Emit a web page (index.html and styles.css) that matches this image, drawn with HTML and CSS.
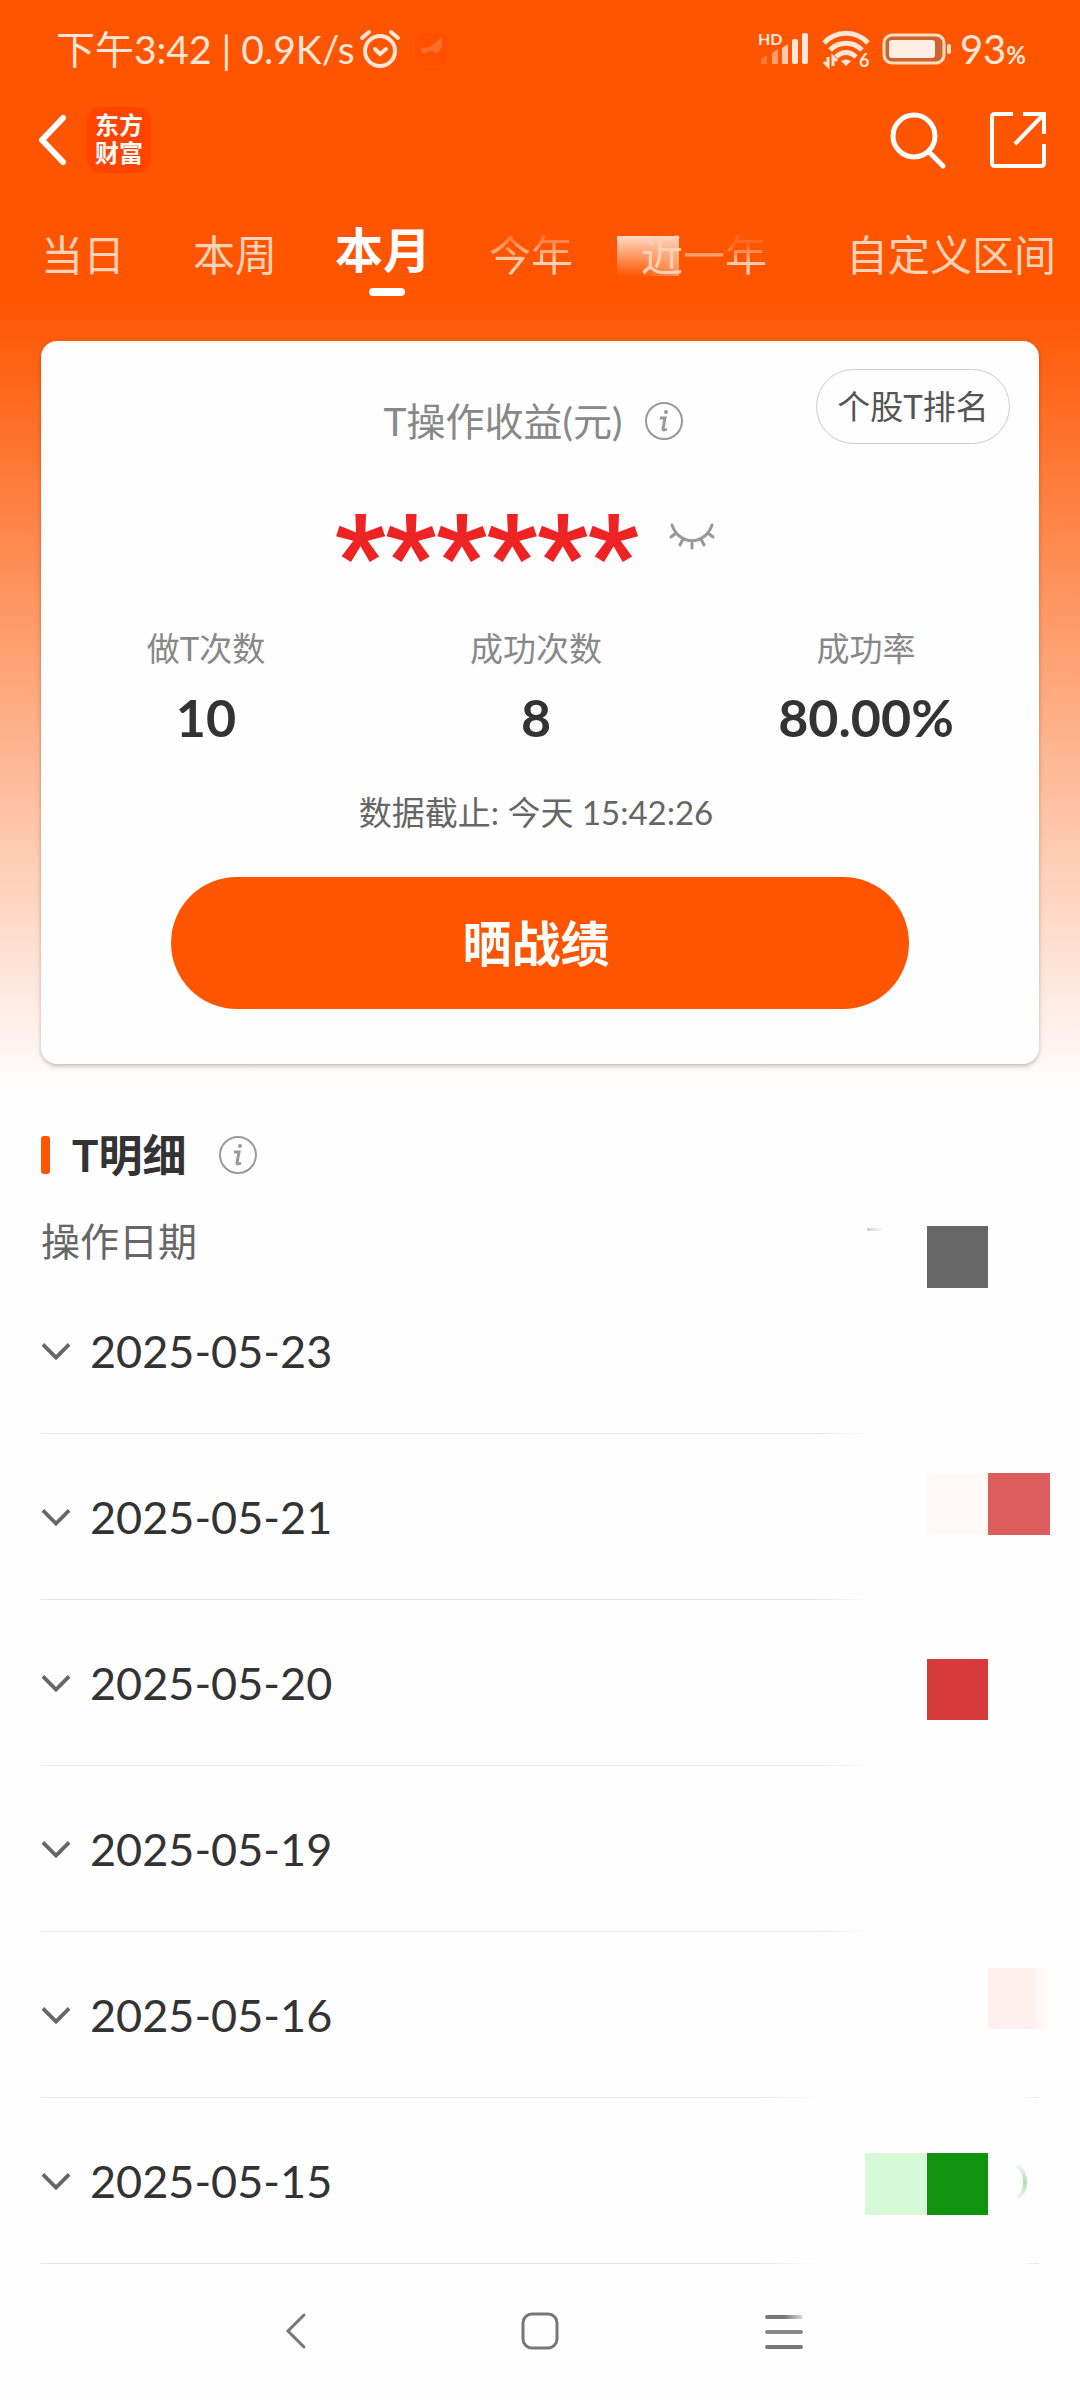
FILE: index.html
```html
<!DOCTYPE html>
<html lang="zh-CN">
<head>
  <meta charset="UTF-8">
  <meta name="viewport" content="width=device-width, initial-scale=1">
  <title>T操作收益</title>
  <link rel="stylesheet" href="styles.css">
</head>
<body>
  <div class="hero">
    <div class="status-bar">
      <span class="status-time">下午3:42 | 0.9K/s</span>
      <svg class="alarm" width="42" height="40" viewBox="0 0 42 40" fill="none" stroke="#ffe6d6" stroke-linecap="round">
        <circle cx="21" cy="22" r="15" stroke-width="4"/>
        <path d="M3 9l7-6M39 9l-7-6" stroke-width="4"/>
        <path d="M16 20l5 5 6-5" stroke-width="4"/>
      </svg>
      <svg class="app-mark" width="32" height="32" viewBox="0 0 32 32">
        <rect width="32" height="32" rx="8" fill="#ff4d00"/>
        <path d="M6 15c8 0 14-3 20-11 3 8 0 14-5 17-2-3-4-4-7-3-2 1-3 3-5 3-2-1-3-3-3-6z" fill="#ff8044"/>
      </svg>
      <div class="status-right">
        <svg width="52" height="36" viewBox="0 0 52 36" fill="#ffe6d6">
          <text x="0" y="14" class="hd">HD</text>
          <path d="M3 28l6-4v9H3z" opacity=".25"/>
          <path d="M14 22l6-4v15h-6z" opacity=".5"/>
          <path d="M24 17l6-4v20h-6z" opacity=".8"/>
          <rect x="34" y="8" width="6" height="25" rx="2"/>
          <rect x="44" y="2" width="6" height="31" rx="2"/>
        </svg>
        <svg width="48" height="38" viewBox="0 0 48 38" fill="none" stroke="#ffe6d6" stroke-width="5">
          <path d="M2 13c12-13 32-13 44 0"/>
          <path d="M8 20c9-9 23-9 32 0"/>
          <path d="M14 27c6-6 14-6 20 0"/>
          <path d="M24 36l-5-5q5-3 10 0z" fill="#ffe6d6" stroke="none"/>
          <path d="M6 27v9l-4-4M11 36v-9l4 4" stroke-width="3"/>
          <text x="37" y="37" class="wifi-six">6</text>
        </svg>
        <svg width="70" height="32" viewBox="0 0 70 32">
          <rect x="2" y="2" width="60" height="28" rx="8" fill="#cc6430" stroke="#ffdcc0" stroke-width="3"/>
          <rect x="7" y="7" width="46" height="18" rx="3" fill="#ffeee4"/>
          <rect x="65" y="11" width="4" height="10" rx="2" fill="#ffdcc0"/>
        </svg>
        <span class="battery-text">93<small>%</small></span>
      </div>
    </div>

    <header class="app-header">
      <button class="icon-button" aria-label="返回">
        <svg width="28" height="50" viewBox="0 0 28 50" fill="none" stroke="#fff" stroke-width="6" stroke-linecap="round" stroke-linejoin="round"><path d="M25 3L4 25l21 22"/></svg>
      </button>
      <div class="logo"><span>东方</span><span>财富</span></div>
      <div class="header-actions">
        <button class="icon-button" aria-label="搜索">
          <svg width="56" height="56" viewBox="0 0 56 56" fill="none" stroke="#fff" stroke-width="5" stroke-linecap="round"><circle cx="24" cy="24" r="21"/><path d="M39 40l14 14"/></svg>
        </button>
        <button class="icon-button" aria-label="分享">
          <svg width="56" height="56" viewBox="0 0 56 56" fill="none" stroke="#fff" stroke-width="4"><path d="M23 2H5Q2 2 2 5v46q0 3 3 3h46q3 0 3-3V32"/><path d="M33 2h21v20M54 2L25 32"/></svg>
        </button>
      </div>
    </header>

    <nav class="tabs">
      <a href="#">当日</a>
      <a href="#">本周</a>
      <a href="#" class="active">本月</a>
      <a href="#" class="fade">今年</a>
      <a href="#" class="smudge"><span>近</span><span class="fade">一年</span></a>
      <a href="#" class="last">自定义区间</a>
    </nav>

    <main class="card">
      <button class="rank-button">个股T排名</button>
      <div class="card-title">
        <span>T操作收益(元)</span>
        <svg width="40" height="40" viewBox="0 0 40 40"><circle cx="20" cy="20" r="18" fill="none" stroke="#999" stroke-width="2"/><circle cx="22" cy="11" r="2" fill="#999"/><path d="M16 17h5l-2 11q0 2 4 0" fill="none" stroke="#999" stroke-width="3"/></svg>
      </div>
      <div class="profit">
        <span class="stars">******</span>
        <button class="icon-button" aria-label="显示金额">
          <svg width="46" height="28" viewBox="0 0 46 28" fill="none" stroke="#999" stroke-width="3" stroke-linecap="round"><path d="M3 3c7 21 33 21 40 0M7 11l-5 4M39 11l5 4M14 17l-3 6M32 17l3 6M23 19v7"/></svg>
        </button>
      </div>
      <dl class="stats">
        <div><dt>做T次数</dt><dd>10</dd></div>
        <div><dt>成功次数</dt><dd>8</dd></div>
        <div><dt>成功率</dt><dd>80.00%</dd></div>
      </dl>
      <p class="deadline">数据截止: 今天 15:42:26</p>
      <button class="share-button">晒战绩</button>
    </main>
  </div>

  <section class="detail">
    <h2>
      <span>T明细</span>
      <svg width="40" height="40" viewBox="0 0 40 40"><circle cx="20" cy="20" r="18" fill="none" stroke="#999" stroke-width="2"/><circle cx="22" cy="11" r="2" fill="#999"/><path d="M16 17h5l-2 11q0 2 4 0" fill="none" stroke="#999" stroke-width="3"/></svg>
    </h2>
    <div class="column-head">操作日期</div>
    <ul class="dates">
      <li><button><svg class="chevron" viewBox="0 0 32 20"><path d="M2 3l14 14L30 3"/></svg>2025-05-23</button></li>
      <li><button><svg class="chevron" viewBox="0 0 32 20"><path d="M2 3l14 14L30 3"/></svg>2025-05-21</button></li>
      <li><button><svg class="chevron" viewBox="0 0 32 20"><path d="M2 3l14 14L30 3"/></svg>2025-05-20</button></li>
      <li><button><svg class="chevron" viewBox="0 0 32 20"><path d="M2 3l14 14L30 3"/></svg>2025-05-19</button></li>
      <li class="tail"><button><svg class="chevron" viewBox="0 0 32 20"><path d="M2 3l14 14L30 3"/></svg>2025-05-16</button></li>
      <li class="tail"><button><svg class="chevron" viewBox="0 0 32 20"><path d="M2 3l14 14L30 3"/></svg>2025-05-15</button></li>
    </ul>
    <!-- mosaic over the amounts -->
    <svg class="mosaic" width="220" height="1000" viewBox="0 0 220 1000">
      <defs>
        <linearGradient id="pink"><stop offset=".7" stop-color="#fff0ee"/><stop offset="1" stop-color="#fff0ee" stop-opacity="0"/></linearGradient>
        <linearGradient id="dash"><stop offset="0" stop-color="#ccc"/><stop offset="1" stop-color="#ccc" stop-opacity="0"/></linearGradient>
        <linearGradient id="green" x2="0" y2="1"><stop offset="0" stop-color="#b0dcb0" stop-opacity=".2"/><stop offset=".5" stop-color="#b0dcb0"/><stop offset="1" stop-color="#b0dcb0" stop-opacity=".2"/></linearGradient>
      </defs>
      <rect x="7" y="2" width="16" height="3" fill="url(#dash)"/>
      <rect x="67" y="0" width="61" height="62" fill="#666"/>
      <rect x="67" y="247" width="61" height="62" fill="#fffaf8"/>
      <rect x="128" y="247" width="62" height="62" fill="#db5d5e"/>
      <rect x="67" y="433" width="61" height="61" fill="#d73a3b"/>
      <rect x="128" y="742" width="62" height="61" fill="url(#pink)"/>
      <rect x="5" y="927" width="62" height="62" fill="#d6f9d7"/>
      <rect x="67" y="927" width="61" height="62" fill="#10940f"/>
      <path d="M157 940q8 4 8 16t-8 16" fill="none" stroke="url(#green)" stroke-width="4"/>
    </svg>
  </section>

  <div class="system-nav">
    <button class="icon-button" aria-label="后退"><svg width="38" height="38" viewBox="0 0 38 38"><path d="M27 3L11 19l16 16"/></svg></button>
    <button class="icon-button" aria-label="主页"><svg width="38" height="38" viewBox="0 0 38 38"><rect x="2" y="2" width="34" height="34" rx="9"/></svg></button>
    <button class="icon-button" aria-label="菜单">
      <svg width="38" height="38" viewBox="0 0 38 38">
        <defs><linearGradient id="line"><stop offset=".5" stop-color="#777"/><stop offset="1" stop-color="#ddd"/></linearGradient></defs>
        <rect class="bar" y="3" width="38" height="4" rx="2" fill="url(#line)"/>
        <rect class="bar" y="18" width="38" height="4" rx="2" fill="#888"/>
        <rect class="bar" y="33" width="38" height="4" rx="2" fill="#777"/>
      </svg>
    </button>
  </div>
</body>
</html>
```
FILE: styles.css
```css
* {
  box-sizing: border-box;
}
body {
  margin: 0;
  background: #fefefe;
  color: #333;
  font-family: Lato, "Noto Sans CJK SC", sans-serif;
}
button {
  font-family: inherit;
  color: inherit;
  background: none;
  border: none;
  padding: 0;
  cursor: pointer;
}
svg {
  display: block;
  flex: none;
  overflow: visible;
}
.icon-button {
  display: flex;
}
.hero {
  padding-bottom: 40px;
  background: linear-gradient(#ff5500 300px, #fefefe 1090px);
}

/* status bar */
.status-bar {
  display: flex;
  align-items: center;
  height: 98px;
  padding: 0 54px 0 56px;
  color: #ffe6d6;
}
.status-time {
  padding-bottom: 4px;
  font-size: 39px;
  white-space: nowrap;
}
.alarm {
  margin-left: 4px;
}
.app-mark {
  margin-left: 14px;
  opacity: 0.6;
}
.status-right {
  display: flex;
  align-items: center;
  gap: 12px;
  margin-left: auto;
}
.hd {
  font-size: 16px;
  font-weight: 700;
}
.wifi-six {
  font-size: 18px;
  font-weight: 700;
  fill: #ffe6d6;
  stroke: none;
}
.battery-text {
  margin-left: -4px;
  font-size: 40px;
}
.battery-text small {
  font-size: 24px;
  font-weight: 700;
}

/* header */
.app-header {
  display: flex;
  align-items: center;
  height: 84px;
  padding: 0 34px 0 38px;
}
.logo {
  display: flex;
  flex-direction: column;
  align-items: center;
  justify-content: center;
  width: 64px;
  height: 66px;
  margin-left: 21px;
  border-radius: 14px;
  background: #ff4400;
  color: #fff;
  font-family: "Liberation Sans", "Noto Sans CJK SC", sans-serif;
  font-size: 24px;
  font-weight: 700;
  line-height: 28px;
}
.header-actions {
  display: flex;
  gap: 44px;
  margin-left: auto;
}

/* tabs */
.tabs {
  display: flex;
  align-items: flex-start;
  gap: 68px;
  height: 138px;
  padding: 30px 24px 0 41px;
  white-space: nowrap;
}
.tabs a {
  padding-top: 10px;
  color: #ffd2b8;
  font-size: 42px;
  text-decoration: none;
}
.tabs .active {
  position: relative;
  margin: 0 -10px;
  padding-top: 0;
  color: #fff;
  font-size: 48px;
  font-weight: 700;
}
.tabs .active::after {
  content: "";
  position: absolute;
  left: 50%;
  bottom: -14px;
  width: 36px;
  height: 8px;
  margin-left: -14px;
  border-radius: 4px;
  background: #fff;
}
.tabs .fade {
  background: linear-gradient(#ff6a20 30%, #ffd2b8 70%);
  -webkit-background-clip: text;
  background-clip: text;
  color: transparent;
}
.tabs .smudge {
  position: relative;
}
.tabs .smudge::before {
  content: "";
  position: absolute;
  left: -24px;
  top: 24px;
  width: 62px;
  height: 40px;
  background: linear-gradient(100deg, transparent 40%, #ffc09c99), linear-gradient(#ffdcc8, #ff5500);
}
.tabs .smudge span {
  position: relative;
}
.tabs .last {
  margin-left: auto;
}

/* card */
.card {
  position: relative;
  margin: 21px 41px 0;
  padding: 48px 0 55px;
  border-radius: 16px;
  background: #fefefe;
  box-shadow: 0 2px 4px rgba(0, 0, 0, 0.25);
}
.rank-button {
  position: absolute;
  top: 28px;
  right: 29px;
  width: 194px;
  height: 75px;
  padding-bottom: 4px;
  border: 1px solid #ccc;
  border-radius: 38px;
  color: #555;
  font-size: 33px;
  white-space: nowrap;
}
.card-title {
  display: flex;
  align-items: center;
  justify-content: center;
  gap: 22px;
  height: 64px;
  padding-right: 12px;
  color: #888;
  font-size: 39px;
}
.card-title span {
  padding-bottom: 4px;
}
.profit {
  display: flex;
  align-items: center;
  justify-content: center;
  gap: 30px;
  height: 166px;
  padding-right: 30px;
}
.stars {
  height: 44px;
  color: #ee2324;
  font-family: "Liberation Sans", sans-serif;
  font-size: 130px;
  line-height: 92px;
  -webkit-text-stroke: 2px #ee2324;
}
.stats {
  display: flex;
  margin: 0;
  padding-right: 8px;
  text-align: center;
}
.stats div {
  flex: 1;
}
.stats dt {
  color: #888;
  font-size: 33px;
  line-height: 58px;
}
.stats dd {
  margin: 0;
  font-size: 52px;
  font-weight: 700;
  line-height: 80px;
}
.deadline {
  margin: 26px 0 36px;
  padding-right: 8px;
  color: #666;
  font-size: 33px;
  line-height: 58px;
  text-align: center;
}
.share-button {
  display: block;
  width: 74%;
  height: 132px;
  margin: 0 auto;
  padding: 0 8px 6px 0;
  border-radius: 66px;
  background: #ff5500;
  color: #fff;
  font-size: 49px;
  font-weight: 700;
}

/* detail list */
.detail {
  position: relative;
  padding: 0 41px;
}
.detail h2 {
  display: flex;
  align-items: center;
  height: 102px;
  margin: 0;
  font-size: 44px;
}
.detail h2 span {
  padding-bottom: 4px;
}
.detail h2::before {
  content: "";
  width: 9px;
  height: 38px;
  margin-right: 22px;
  border-radius: 3px;
  background: #ff5500;
}
.detail h2 svg {
  margin-left: 32px;
}
.column-head {
  height: 62px;
  color: #666;
  font-size: 39px;
  line-height: 70px;
}
.dates {
  margin: 0;
  padding: 0;
  list-style: none;
}
.dates li {
  height: 166px;
  background: linear-gradient(90deg, #e8e8e8 78%, transparent 83%) bottom / 100% 1px no-repeat;
}
.dates .tail {
  background: linear-gradient(90deg, #e8e8e8 72%, transparent 78%, transparent 98%, #e8e8e8) bottom / 100% 1px no-repeat;
}
.dates button {
  display: flex;
  align-items: center;
  gap: 19px;
  height: 100%;
  font-size: 45px;
}
.chevron {
  width: 30px;
  height: 20px;
  fill: none;
  stroke: #666;
  stroke-width: 4;
}
.mosaic {
  position: absolute;
  top: 122px;
  right: 0;
}

/* system navigation */
.system-nav {
  display: flex;
  justify-content: center;
  gap: 206px;
  padding: 48px 0;
}
.system-nav svg {
  fill: none;
  stroke: #777;
  stroke-width: 3;
  stroke-linecap: round;
}
.system-nav .bar {
  stroke: none;
}
```
